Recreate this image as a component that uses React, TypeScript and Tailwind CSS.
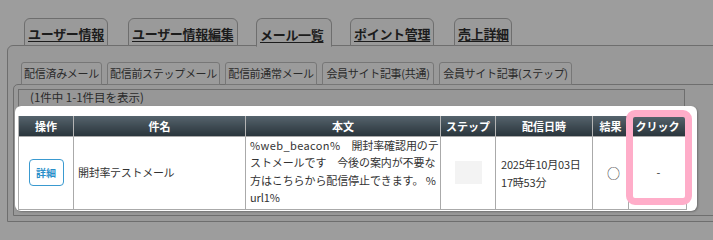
import React from "react";

const font = "font-['Meiryo','Noto_Sans_CJK_JP',sans-serif]";

function TopTab({ label, w, ml, active }: { label: string; w: string; ml: string; active?: boolean }) {
  return (
    <div
      className={`${w} ${ml} h-[28px] border border-[#6e6e6e] rounded-t-[6px] bg-[#9a9a9a] flex items-end pl-[3px] pb-[3px] ${
        active ? "border-b-[#999999] h-[29px]" : ""
      }`}
    >
      <span className="text-[13px] leading-[16px] font-bold text-[#1c1c1c] underline underline-offset-[2px] whitespace-nowrap tracking-[-0.3px]">
        {label}
      </span>
    </div>
  );
}

function SubTab({ label, w }: { label: string; w: string }) {
  return (
    <div className={`${w} h-[23px] border border-[#777] rounded-t-[3px] bg-[#9b9b9b] flex items-center justify-center`}>
      <span className="text-[11px] text-[#2a2a2a] whitespace-nowrap tracking-[-0.3px]">{label}</span>
    </div>
  );
}

export default function App() {
  const th =
    "h-[20px] p-0 text-[11px] font-bold text-white text-center border-x border-[#b4b4b4] bg-gradient-to-b from-[#56646d] to-[#2a353c] whitespace-nowrap";
  const td = "border border-[#aaa] align-middle text-[11px] text-[#333]";
  return (
    <div className={`w-[713px] h-[240px] overflow-hidden bg-[#9d9d9d] ${font}`}>
      <div className="pt-[18px] pl-[7px]">
        <div className="flex items-start pl-[17px] relative z-10 h-[28px]">
          <TopTab label="ユーザー情報" w="w-[84px]" ml="ml-0" />
          <TopTab label="ユーザー情報編集" w="w-[110px]" ml="ml-[20px]" />
          <TopTab label="メール一覧" w="w-[76px]" ml="ml-[18px]" active />
          <TopTab label="ポイント管理" w="w-[84px]" ml="ml-[18px]" />
          <TopTab label="売上詳細" w="w-[58px]" ml="ml-[20px]" />
        </div>
        <div className="w-[800px] border border-[#6e6e6e] rounded-tl-[6px] bg-[#999999] -mt-px pl-[5px] pt-[16px] pb-[5px]">
          <div className="flex gap-[5px] pl-[8px] relative z-10">
            <SubTab label="配信済みメール" w="w-[81px]" />
            <SubTab label="配信前ステップメール" w="w-[113px]" />
            <SubTab label="配信前通常メール" w="w-[92px]" />
            <SubTab label="会員サイト記事(共通)" w="w-[112px]" />
            <SubTab label="会員サイト記事(ステップ)" w="w-[133px]" />
          </div>
          <div className="w-[800px] border border-[#6e6e6e] rounded-tl-[5px] -mt-px pt-[4px] pb-[4px]">
            <div className="ml-[4px] w-[667px] h-[18px] border border-[#6e6e6e] bg-[#979797] pl-[11px] flex items-center">
              <span className="text-[11.5px] text-[#2a2a2a] whitespace-nowrap">(1件中 1-1件目を表示)</span>
            </div>
            <div className="ml-[1px] -mt-px w-[682px] h-[105px] bg-white rounded-[6px] shadow-[1px_1px_2px_rgba(0,0,0,0.25)] relative pt-[10px] pl-[3px]">
              <table className="border-collapse w-[668px] table-fixed">
                <colgroup>
                  <col className="w-[55px]" />
                  <col className="w-[172px]" />
                  <col className="w-[195px]" />
                  <col className="w-[55px]" />
                  <col className="w-[97px]" />
                  <col className="w-[36px]" />
                  <col className="w-[58px]" />
                </colgroup>
                <thead>
                  <tr>
                    <th className={th}>操作</th>
                    <th className={th}>件名</th>
                    <th className={th}>本文</th>
                    <th className={th}>ステップ</th>
                    <th className={th}>配信日時</th>
                    <th className={th}>結果</th>
                    <th className={th}>クリック</th>
                  </tr>
                </thead>
                <tbody>
                  <tr className="h-[65px]">
                    <td className={`${td} text-center`}>
                      <div className="mx-auto w-[35px] h-[27px] border border-[#3a9ad0] rounded-[4px] flex items-center justify-center text-[10px] font-bold text-[#2a8fc9]">
                        詳細
                      </div>
                    </td>
                    <td className={`${td} pl-[4px] text-[11.5px] tracking-[-0.3px]`}>開封率テストメール</td>
                    <td className={`${td} pl-[4px] pr-0 leading-[17.5px] pt-0 pb-[2px] whitespace-nowrap tracking-[-0.1px]`}>
                      <span className="tracking-[0.4px]">%web_beacon%</span>　開封率確認用のテ
                      <br />
                      ストメールです　今後の案内が不要な
                      <br />
                      方はこちらから配信停止できます。 %
                      <br />
                      url1%
                    </td>
                    <td className={`${td}`}>
                      <div className="mx-auto w-[27px] h-[23px] bg-[#f3f3f3]" />
                    </td>
                    <td className={`${td} pl-[5px] leading-[18px] tracking-[-0.2px]`}>
                      2025年10月03日
                      <br />
                      17時53分
                    </td>
                    <td className={`${td} text-center text-[13px] pl-[6px]`}>○</td>
                    <td className={`${td} text-center pl-[2px]`}>-</td>
                  </tr>
                </tbody>
              </table>
              <div className="absolute left-[611px] top-[4px] w-[66px] h-[95px] border-[7px] border-[#ffadc9] rounded-[9px]" />
            </div>
          </div>
        </div>
      </div>
    </div>
  );
}
